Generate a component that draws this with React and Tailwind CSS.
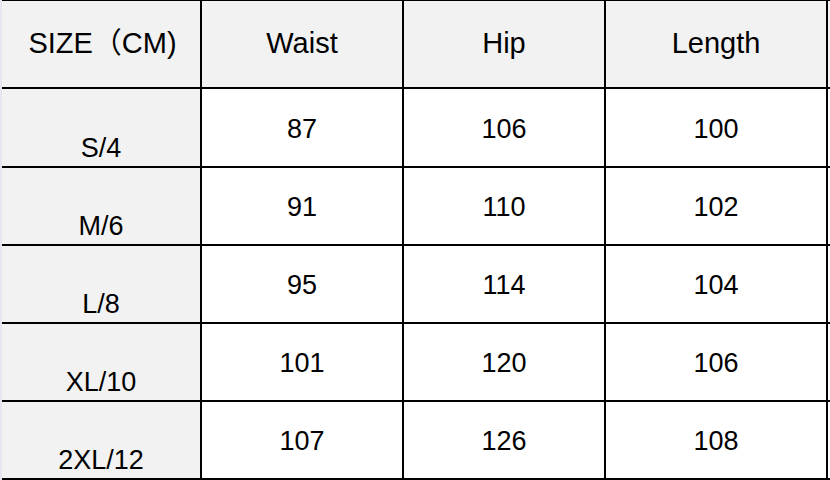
export default function App() {
  const rows = [
    ["S/4", "87", "106", "100"],
    ["M/6", "91", "110", "102"],
    ["L/8", "95", "114", "104"],
    ["XL/10", "101", "120", "106"],
    ["2XL/12", "107", "126", "108"],
  ];
  const heights = ["h-[79px]", "h-[78px]", "h-[78px]", "h-[78px]", "h-[78px]"];
  const font = { fontFamily: '"Liberation Sans", Arial, "Noto Sans CJK SC", sans-serif' };
  return (
    <div className="w-[830px] h-[480px] bg-[#e6e6ee] pl-[2px] text-black" style={font}>
      <div className="w-[828px] border-t border-black bg-white">
        <div className="flex h-[88px] border-b-2 border-black bg-[#f2f2f2] text-[29px]">
          <div className="w-[200px] flex items-center justify-center border-r-2 border-black pl-[3px]">SIZE（CM)</div>
          <div className="w-[202px] flex items-center justify-center border-r-2 border-black">Waist</div>
          <div className="w-[202px] flex items-center justify-center border-r-2 border-black">Hip</div>
          <div className="w-[222px] flex items-center justify-center border-r-2 border-black">Length</div>
        </div>
        {rows.map((r, i) => (
          <div key={i} className={`flex ${heights[i]} border-b-2 border-black text-[27px]`}>
            <div className="w-[200px] flex items-end justify-center bg-[#f2f2f2] border-r-2 border-black pb-[3px] leading-[30px]">{r[0]}</div>
            <div className="w-[202px] flex items-center justify-center border-r-2 border-black pt-[3px]">{r[1]}</div>
            <div className="w-[202px] flex items-center justify-center border-r-2 border-black pt-[3px]">{r[2]}</div>
            <div className="w-[222px] flex items-center justify-center border-r-2 border-black pt-[3px]">{r[3]}</div>
          </div>
        ))}
      </div>
    </div>
  );
}
